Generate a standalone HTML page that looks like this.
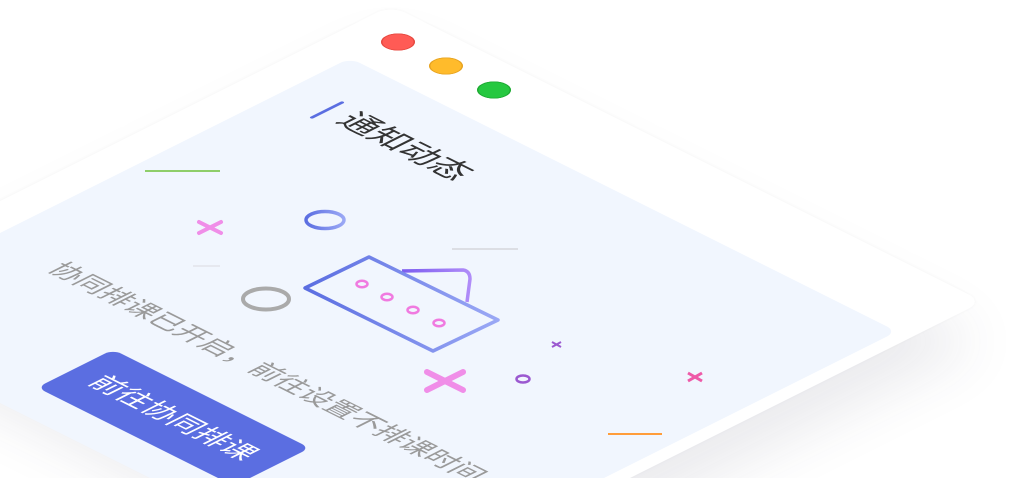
<!DOCTYPE html>
<html><head><meta charset="utf-8"><style>
html,body{margin:0;padding:0;width:1014px;height:478px;overflow:hidden;background:#fff;font-family:"Liberation Sans","Noto Sans CJK SC",sans-serif}
#clip{position:relative;width:1014px;height:478px;overflow:hidden}
#iso{position:absolute;left:350px;top:58px;width:0;height:0;transform-origin:0 0;transform:matrix(1,0.5,-1,0.5,0,0)}
#iso div{position:absolute}
.outer{left:-32px;top:-73px;width:592px;height:560px;background:#fff;border-radius:14px;box-shadow:40px 40px 50px rgba(60,60,90,0.10),0 0 3px rgba(0,0,0,0.04)}
.inner{left:0;top:0;width:547px;height:520px;background:#f1f6fe;border-radius:10px}
.dot{width:24px;height:24px;border-radius:50%;top:-52px}
.bar{left:39px;top:47px;width:3px;height:33px;background:#5b6ee1;border-radius:2px}
.title{left:56px;top:45px;font-size:30px;line-height:34px;color:#333;white-space:nowrap}
.body{left:60px;top:341px;font-size:25px;line-height:30px;color:#9a9a9a;white-space:nowrap}
.btn{left:173px;top:410px;width:197px;height:76px;background:#5b6ee1;border-radius:8px;color:#fff;font-size:26px;line-height:76px;text-align:center;white-space:nowrap}
svg{position:absolute;left:0;top:0}
</style></head><body><div id="clip">
<div id="iso">
<div class="outer"></div>
<div class="inner"></div>
<div class="dot" style="left:-4px;background:#ff5b55;box-shadow:0 0 0 1px #e4483f inset"></div>
<div class="dot" style="left:44px;background:#ffbb2b;box-shadow:0 0 0 1px #e5a222 inset"></div>
<div class="dot" style="left:92px;background:#26c840;box-shadow:0 0 0 1px #1ea832 inset"></div>
<div class="bar"></div>
<div class="title">通知动态</div>
<div class="body">协同排课已开启，前往设置不排课时间</div>
<div class="btn">前往协同排课</div>
</div>
<svg width="1014" height="478" viewBox="0 0 1014 478">
<defs>
<linearGradient id="gb" x1="0" x2="1"><stop offset="0" stop-color="#5b6ee1"/><stop offset="1" stop-color="#9aa8f5"/></linearGradient>
<linearGradient id="gp" x1="0" x2="1"><stop offset="0" stop-color="#7b5cf0"/><stop offset="1" stop-color="#b08cf8"/></linearGradient>
</defs>
<line x1="145" y1="171" x2="220" y2="171" stroke="#8fce6a" stroke-width="2"/>
<g stroke="#f08ee8" stroke-width="4" stroke-linecap="round"><line x1="199" y1="222" x2="221" y2="233"/><line x1="199" y1="233" x2="221" y2="222"/></g>
<ellipse cx="325" cy="220" rx="19" ry="8.5" fill="none" stroke="url(#gb)" stroke-width="3.5"/>
<line x1="452" y1="249" x2="518" y2="249" stroke="#d5d6dc" stroke-width="1.5"/>
<line x1="193" y1="266" x2="220" y2="266" stroke="#e3e4ea" stroke-width="1.5"/>
<ellipse cx="266" cy="299" rx="23" ry="10.5" fill="none" stroke="#aaa" stroke-width="4"/>
<path d="M402 271 L463 270 Q470 271 470 279 L467 302" fill="none" stroke="url(#gp)" stroke-width="3.5" stroke-linejoin="round"/>
<path d="M305 288 L369 257 L498 320 L433 351 Z" fill="#f1f6fe" stroke="url(#gb)" stroke-width="3.5" stroke-linejoin="round"/>
<g fill="none" stroke="#f07ae0" stroke-width="2.5">
<ellipse cx="362" cy="284" rx="5.5" ry="3.2"/><ellipse cx="387" cy="297" rx="5.5" ry="3.2"/><ellipse cx="413" cy="310" rx="5.5" ry="3.2"/><ellipse cx="439" cy="323" rx="5.5" ry="3.2"/></g>
<g stroke="#f08ee8" stroke-width="6" stroke-linecap="round"><line x1="427" y1="372" x2="463" y2="390"/><line x1="427" y1="390" x2="463" y2="372"/></g>
<g stroke="#9b59d0" stroke-width="2"><line x1="552" y1="342" x2="561" y2="347"/><line x1="552" y1="347" x2="561" y2="342"/></g>
<ellipse cx="523" cy="379" rx="6.5" ry="3.5" fill="none" stroke="#9b59d0" stroke-width="2.5"/>
<g stroke="#ee5aa8" stroke-width="3"><line x1="688" y1="373" x2="702" y2="381"/><line x1="688" y1="381" x2="702" y2="373"/></g>
<line x1="608" y1="434" x2="662" y2="434" stroke="#ff9d3a" stroke-width="2"/>
</svg>
</div></body></html>
